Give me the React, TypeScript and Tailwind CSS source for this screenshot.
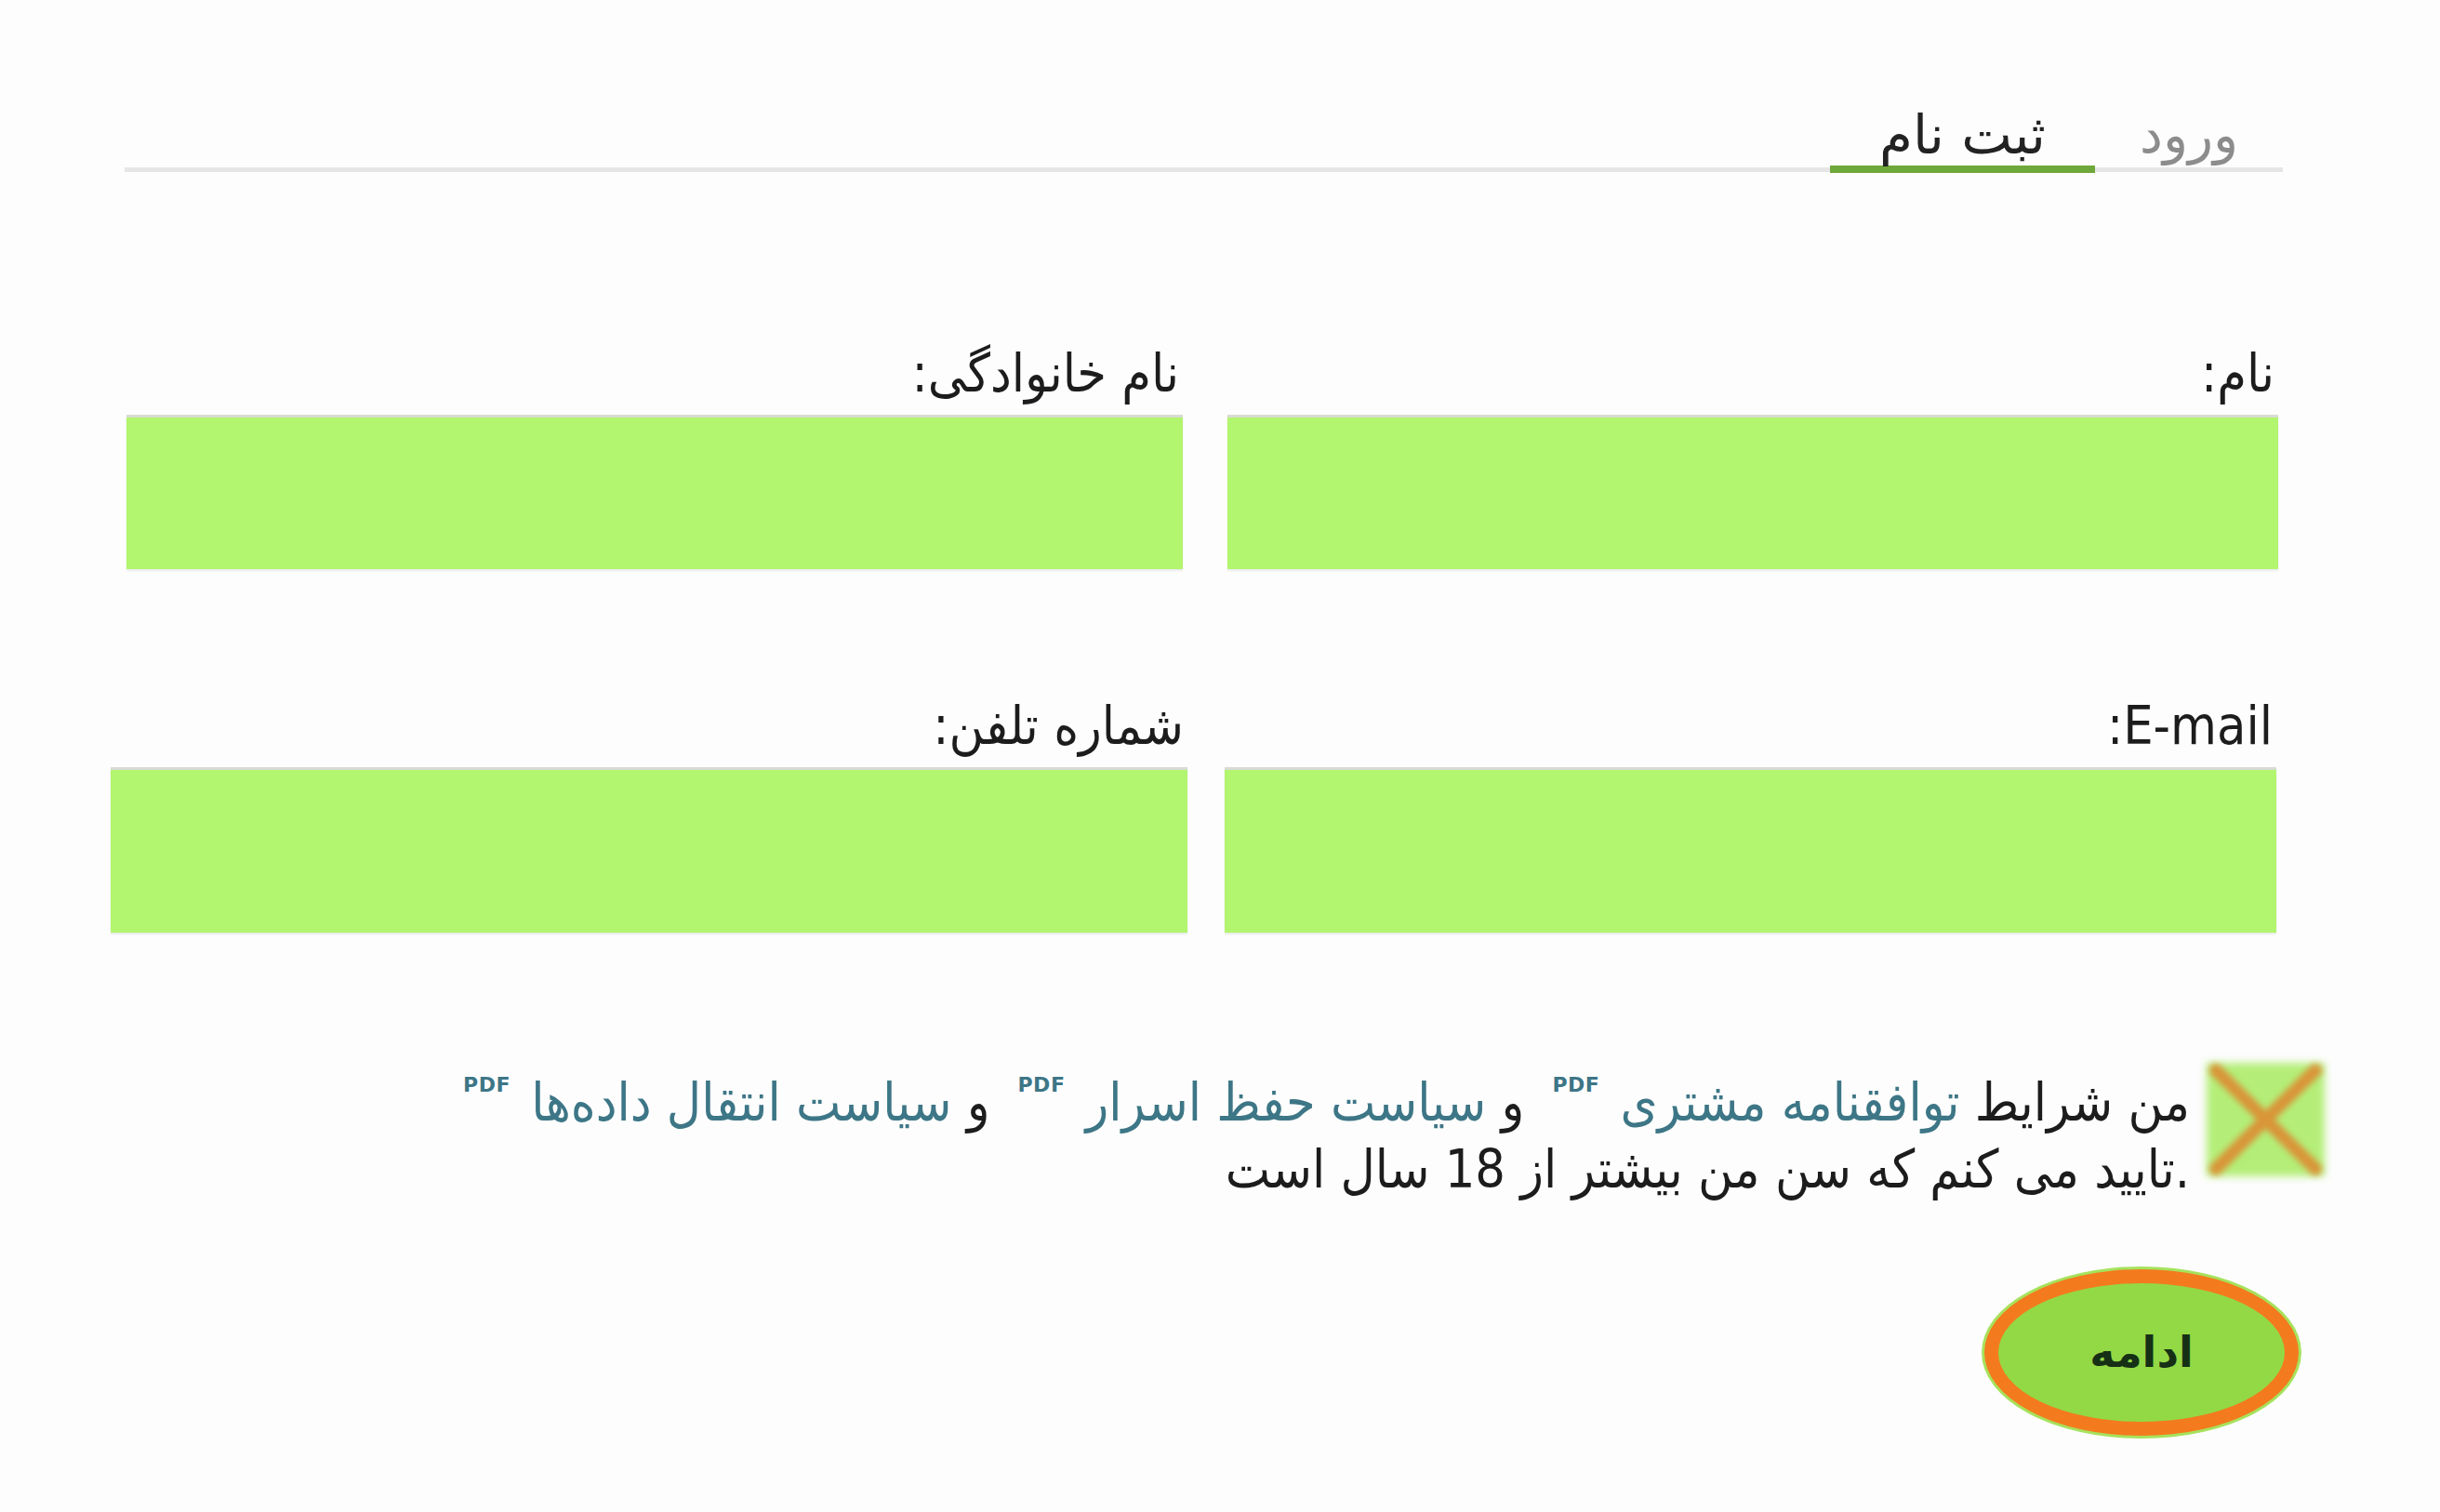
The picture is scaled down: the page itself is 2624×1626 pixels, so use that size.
import React from 'react'

const fa = { fontFamily: '"DejaVu Sans", "Noto Sans", sans-serif' }
const faCond = { fontFamily: '"DejaVu Sans Condensed", "DejaVu Sans", sans-serif' }

function Pdf() {
  return (
    <sup className="mr-[22px] ml-[30px] align-super text-[22px] font-bold tracking-wide text-[#3d7686]" style={fa}>
      PDF
    </sup>
  )
}

function Field({ label, width, height }: { label: string; width: string; height: string }) {
  return (
    <div className={`flex flex-col ${width}`}>
      <label className="mb-[12px] pr-1 text-[57px] leading-[66px] text-[#1c1c1c]" style={faCond}>
        {label}
      </label>
      <div className={`${height} w-full bg-[#b2f56e] shadow-[inset_0_3px_0_#d8dcd4,0_2px_2px_rgba(0,0,0,0.08)]`} />
    </div>
  )
}

function Tabs() {
  return (
    <div className="mr-[169px] ml-[134px] flex h-[185px] items-end border-b-[5px] border-[#e6e6e6]">
      <button className="w-[202px] pb-[2px] text-center text-[56px] leading-[66px] text-[#8c8c8c]">ورود</button>
      <button className="relative -mb-[6px] w-[285px] border-b-[8px] border-[#6fa83a] pb-0 text-center text-[58px] leading-[66px] text-[#222]">
        ثبت نام
      </button>
    </div>
  )
}

export default function App() {
  return (
    <div dir="rtl" className="min-h-[1626px] w-[2624px] bg-[#fdfdfd]" style={fa}>
      <Tabs />

      <div className="mt-[183px] mr-[174px] ml-[136px] flex gap-[48px]">
        <Field label="نام:" width="w-[1130px]" height="h-[166px]" />
        <Field label="نام خانوادگی:" width="w-[1136px]" height="h-[166px]" />
      </div>

      <div className="mt-[135px] mr-[176px] ml-[119px] flex gap-[40px]">
        <Field label="E-mail:" width="w-[1131px]" height="h-[178px]" />
        <Field label="شماره تلفن:" width="w-[1158px]" height="h-[178px]" />
      </div>

      <div className="mt-[140px] mr-[124px] flex items-start gap-[18px]">
        <div className="relative h-[122px] w-[127px] shrink-0">
          <div className="absolute inset-0 bg-[#b4ee78] blur-[4px]" />
          <svg className="absolute inset-0 h-full w-full blur-[3px]" viewBox="0 0 127 122">
            <path d="M10 8 L117 114 M117 8 L10 114" stroke="#e0872e" strokeWidth="14" strokeLinecap="round" opacity="0.85" />
          </svg>
        </div>
        <p className="mt-[6px] text-[57px] leading-[72px] text-[#1c1c1c]" style={faCond}>
          من شرایط <a className="text-[#3d7686]">توافقنامه مشتری</a>
          <Pdf />و <a className="text-[#3d7686]">سیاست حفظ اسرار</a>
          <Pdf />و <a className="text-[#3d7686]">سیاست انتقال داده‌ها</a>
          <Pdf />
          <br />
          .تایید می کنم که سن من بیشتر از 18 سال است
        </p>
      </div>

      <div className="mt-[72px] mr-[152px] flex">
        <button className="flex h-[179px] w-[338px] items-center justify-center rounded-[50%] border-[15px] border-[#f47a1e] bg-[#93d945] text-[46px] font-semibold text-[#163016] shadow-[0_0_0_3px_#a6e25c]">
          ادامه
        </button>
      </div>
    </div>
  )
}
